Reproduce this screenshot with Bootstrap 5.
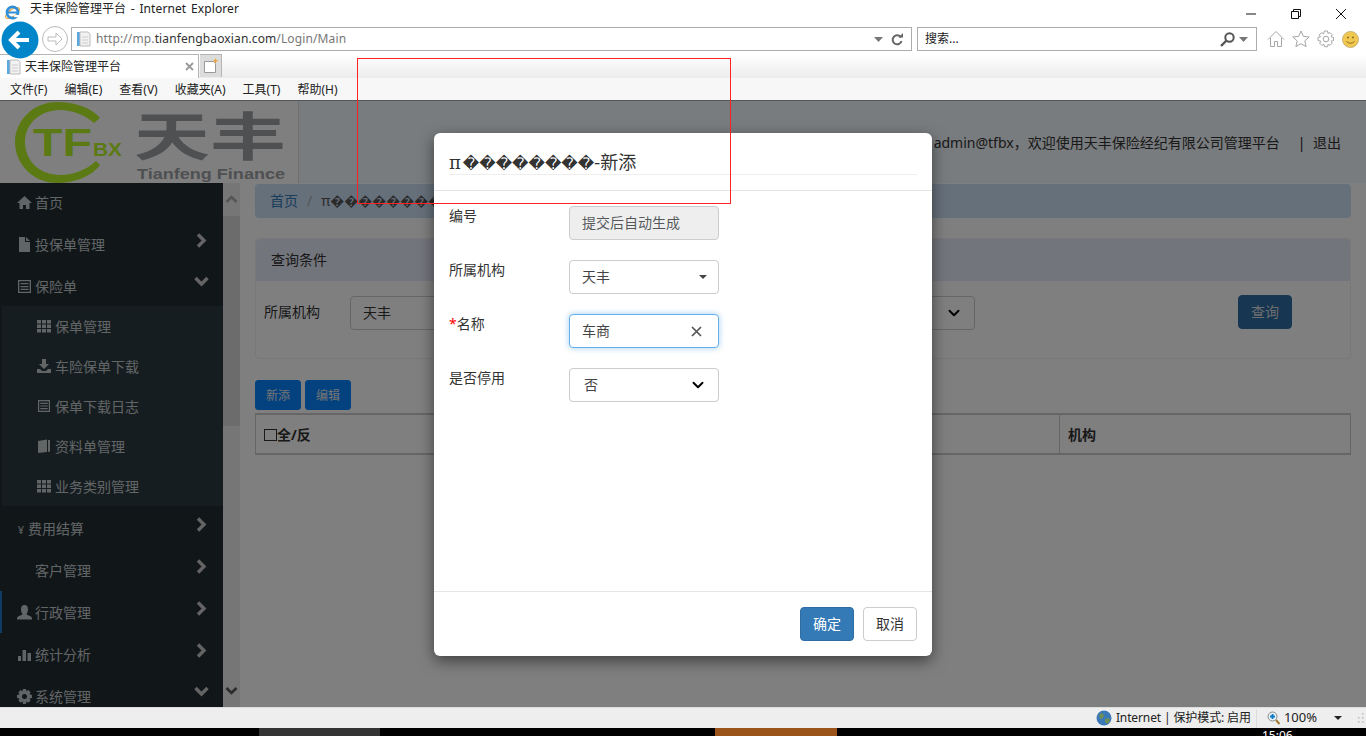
<!DOCTYPE html>
<html lang="zh-CN">
<head>
<meta charset="utf-8">
<title>天丰保险管理平台</title>
<link rel="stylesheet" href="https://cdn.jsdelivr.net/npm/bootstrap@5.3.0/dist/css/bootstrap.min.css">
<style>
html,body{height:100%;overflow:hidden;margin:0}
body{font-family:"Noto Sans","Noto Sans CJK SC",sans-serif;font-size:14px;color:#333;background:#fff}
.shell{height:736px;position:relative;overflow:hidden}
/* browser chrome */
.ie-title{height:26px;padding-left:4px;font-size:12px;color:#222;line-height:18px}
.ie-title-text{margin-left:9px;margin-top:-2px;word-spacing:1.5px;letter-spacing:.1px;padding-top:2px}
.ie-title-cn{letter-spacing:0}
.ie-win{margin-top:9px;padding-right:20px}
.ie-win svg{display:block;margin-left:35px}
.ie-addr{height:28px;padding-left:1px}
.ie-back{margin-top:-5px;flex:none;position:relative;z-index:2}
.ie-fwd{margin-left:2px;margin-top:-1px;flex:none}
.ie-bar{height:24px;border:1px solid #adadad;background:#fff;margin-top:1px;font-size:12px;color:#777;padding:0 4px}
.ie-url{width:841px;margin-left:2px;letter-spacing:.12px}
.ie-url b{font-weight:400;color:#333}
.ie-url-text{margin-left:5px;white-space:nowrap}
.ie-search{width:340px;margin-left:5px;color:#222;padding-left:7px;font-size:12px}
.ie-tools{gap:7px;margin-left:10px;height:24px;margin-top:1px}
.ie-tabs{height:24px;background:linear-gradient(#fff,#ececec)}
.ie-tab{width:199px;height:24px;background:#fff;border:1px solid #b5b5b5;border-width:1px 1px 0 0;font-size:12px;color:#222;padding:0 4px 0 6px}
.ie-tab-text{margin-left:4px}
.ie-new{width:22px;height:23px;margin-left:1px;background:#dcdcdc;border:1px solid #b5b5b5;border-width:1px 1px 0 0}
.ie-menu{height:23px;background:#f7f7f7;font-size:12px;gap:17px;padding:1px 0 0 10px;color:#222;border-bottom:1px solid #555}
/* page */
.pg{height:606px;position:relative;overflow:hidden}
.pg-head{height:82px;background:#f2f8fc}
.logo-box{width:299px;height:82px;background:#fff;border-right:1px solid #ddd;flex:none}
.logo-box svg{display:block}
.logo-ring{fill:#b8f428}
.logo-tf{fill:#b8f428;font-family:"Liberation Sans",sans-serif;font-weight:700}
.logo-cn{fill:#9ea0a4;font-family:"Noto Sans CJK SC",sans-serif;font-weight:700}
.logo-en{fill:#9ea0a4;font-family:"Liberation Sans",sans-serif;font-weight:700}
.head-user{margin-left:auto;color:#333;font-size:14px;padding-right:25px;margin-top:32px;white-space:nowrap;height:20px;line-height:20px}
.head-sep{margin:0 4px 0 18px;color:#222}
.pg-main{height:524px}
.side{width:223px;background:#222d32;flex:none;overflow:hidden;color:#c4cacd}
.side-inner{margin-top:-2px}
.side-item{height:42px;padding:0 16px 0 17px;font-size:14px}
.side-item svg.gi{width:15px;height:15px;fill:#c4cacd;flex:none;margin-right:3px}
.side-item .chev{margin-left:auto;margin-top:-8px;flex:none}
.side-item .chev-d{margin-right:-2px;margin-top:-9px}
.chev{fill:none;stroke:#c8c8c8;stroke-width:3.4}
.side-item.on{box-shadow:inset 2px 0 0 #1e78c8}
.side-yen{width:8px;margin-right:3px;margin-top:5px;text-align:center;font-size:11px}
.side-blank{width:18px}
.side-sub{background:#2c3b41;margin:-1px 0 1px 2px;list-style:none;padding:0}
.side-sub li{height:40px;padding-left:35px;font-size:14px}
.side-sub svg{width:14px;height:14px;fill:#c4cacd;margin-right:4px;flex:none}
.sbar{width:17px;background:#ececec;flex:none;position:relative}
.sbar-btn{height:33px;align-items:center;justify-content:center}
.sbar-thumb{height:210px;background:#d8d8d8}
.sbar-fill{flex:1}
.sbar svg{fill:none;stroke:#555;stroke-width:2.6}
.sbar-up svg{stroke:#aaa}
.cont{flex:1;background:#fff;padding:1px 15px 0;min-width:0}
.crumb{height:34px;background:#cce0f6;border-radius:4px;padding:0 15px 2px;margin:0 0 20px;--bs-breadcrumb-divider-color:#aaa;--bs-breadcrumb-item-padding-x:9px}
.crumb a{color:#337ab7;text-decoration:none}
.crumb .breadcrumb-item.active{color:#555}
.qpanel{height:121px;border:1px solid #f0f0f0;border-radius:4px;--bs-card-border-color:#f0f0f0;margin-bottom:21px}
.qhead{height:42px;background:#e6ebf8;border:0;padding:0 15px 2px;font-size:14px;color:#333;border-radius:4px 4px 0 0!important}
.qbody{padding:15px 8px;align-items:flex-start}
.qlabel{width:86px;flex:none;line-height:32px;color:#333}
.qsel{height:34px;border:1px solid #ccc;border-radius:4px;font-size:14px;color:#333;box-shadow:none;flex:none}
.qsel-a{width:300px;padding:0 12px 2px}
.qsel-b{width:300px;margin-left:25px;--bs-form-select-bg-img:none;background-image:url("data:image/svg+xml,%3csvg xmlns='http://www.w3.org/2000/svg' viewBox='0 0 16 16'%3e%3cpath fill='none' stroke='%23000' stroke-linecap='round' stroke-linejoin='round' stroke-width='2.6' d='m2 5 6 6 6-6'/%3e%3c/svg%3e")}
.qbtn{width:54px;height:34px;margin-left:263px;margin-top:-1px;flex:none;padding:0 0 2px;font-size:14px;background:#2c6ca3;border-color:#2e6da4;color:#ddd;border-radius:4px}
.tools{gap:4px;margin-bottom:3px}
.tbtn{width:46px;height:30px;padding:1px 0 0;font-size:12px;background:#0684fe;border-color:#0684fe;color:#e8e8e8;border-radius:3px}
.grid{width:100%;height:42px;margin:0;border-collapse:collapse;table-layout:fixed;--bs-table-border-color:#ccc}
.grid th{border:1px solid #ccc;border-width:2px 1px;padding:0 8px;vertical-align:middle;font-size:14px;color:#333;font-weight:700}
.grid .c-last{width:291px}
.ckb{display:inline-block;width:13px;height:12px;border:1px solid #333;vertical-align:-1px}
/* overlay */
.dim{position:absolute;inset:0;background:rgba(0,0,0,.5)}
.dlg{position:absolute;left:434px;top:32px;width:498px;height:523px;background:#fff;border-radius:6px;box-shadow:0 5px 15px rgba(0,0,0,.5);display:flex;flex-direction:column;color:#333}
.dlg-head{height:58px;padding:15px 15px 0;border-bottom:1px solid #e5e5e5;flex:none}
.dlg-title{font-size:18px;line-height:27px;height:27px;margin:0;font-weight:400;border-bottom:1px solid #eee;color:#333;white-space:nowrap;font-family:"Noto Sans CJK SC",sans-serif}
.dlg-pi{font-family:"DejaVu Serif",serif;margin-right:2px}
.dlg-bad{font-family:"DejaVu Sans",sans-serif;font-size:16px}
.dlg-body{flex:1;padding:15px 15px 0}
.frow{margin-bottom:20px;height:34px}
.flab{width:120px;flex:none;line-height:20px;color:#333}
.req{color:#f00}
.fctl{width:150px;height:34px;border:1px solid #ccc;border-radius:4px;font-size:14px;color:#444;padding:0 12px 2px;box-shadow:none;background-color:#fff}
.fctl:disabled,.fctl-off{background:#eee;color:#aaa;opacity:1}
.fctl-focus{border-color:#66afe9;box-shadow:0 0 6px rgba(102,175,233,.6)}
.f-sel{padding-left:14px;--bs-form-select-bg-img:none;background-image:url("data:image/svg+xml,%3csvg xmlns='http://www.w3.org/2000/svg' viewBox='0 0 16 16'%3e%3cpath fill='none' stroke='%23000' stroke-linecap='round' stroke-linejoin='round' stroke-width='2.6' d='m2 5 6 6 6-6'/%3e%3c/svg%3e")}
.fctl .caret{width:0;height:0;border:4.5px solid transparent;border-top-color:#444;border-bottom:0;margin-top:2px;margin-right:-1px}
.dlg-x{margin-right:4px;margin-top:2px}
.dlg-foot{height:65px;border-top:1px solid #e5e5e5;padding:15px;gap:9px;flex:none}
.okb,.nob{width:54px;height:34px;padding:0 0 2px;font-size:14px;border-radius:4px}
.okb{background:#337ab7;border-color:#2e6da4}
.nob{background:#fff;border-color:#ccc;color:#333}
.redbox{position:absolute;left:357px;top:58px;width:374px;height:146px;border:1px solid #f22;z-index:5;pointer-events:none}
/* status and taskbar */
.ie-status{height:21px;background:#eee;border-top:1px solid #ddd;font-size:12px;color:#222;white-space:nowrap}
.st-txt{margin-left:4px;margin-right:5px;letter-spacing:-.12px}
.st-sep{height:19px;width:1px;background:#ddd;margin-right:10px}
.st-zoom{margin-left:4px;font-size:13px}
.st-tri{margin-left:17px;margin-right:14px;width:0;height:0;border:4px solid transparent;border-top-color:#222;border-bottom:0}
.st-grip{margin-right:2px}
.task{height:8px;background:#000;position:relative;overflow:hidden}
.task-a{margin-left:259px;width:121px;background:#333}
.task-b{margin-left:335px;width:122px;background:#9a5318}
.task-clock{position:absolute;left:1262px;top:1px;color:#fff;font-size:12px;line-height:14px}
</style>
</head>
<body>
<div class="shell">

<div class="ie-title d-flex">
  <svg class="mt-1" width="17" height="17" viewBox="0 0 17 17"><ellipse cx="8.500" cy="9" rx="8" ry="3.500" transform="rotate(-35 8.500 9)" fill="none" stroke="#e8a33d" stroke-width="1.300"/><circle cx="8.500" cy="8.500" r="5.600" fill="none" stroke="#2f8fd8" stroke-width="2.600"/><path d="M4 8.500h9" stroke="#2f8fd8" stroke-width="2"/><path d="M10 12h5" stroke="#fff" stroke-width="2.200"/></svg>
  <div class="ie-title-text"><span class="ie-title-cn">天丰保险管理平台</span> - Internet Explorer</div>
  <div class="ie-win d-flex ms-auto">
    <svg width="10" height="10" viewBox="0 0 10 10"><path d="M0 5h10" stroke="#111"/></svg>
    <svg width="10" height="10" viewBox="0 0 10 10" fill="none" stroke="#111"><path d="M.5 2.500h7v7h-7z"/><path d="M2.500 2.500v-2h7v7h-2"/></svg>
    <svg width="10" height="10" viewBox="0 0 10 10" stroke="#111"><path d="M0 0l10 10M10 0L0 10"/></svg>
  </div>
</div>

<div class="ie-addr d-flex align-items-start">
  <svg class="ie-back" width="38" height="38" viewBox="0 0 38 38"><circle cx="19" cy="19" r="18.500" fill="#0086c9"/><path d="M28 19H11M18 11l-8 8 8 8" fill="none" stroke="#fff" stroke-width="4"/></svg>
  <svg class="ie-fwd" width="28" height="28" viewBox="0 0 28 28"><circle cx="14" cy="14" r="12.500" fill="#fff" stroke="#bbb"/><path d="M7 12h8V8l6 6-6 6v-4H7z" fill="#fff" stroke="#bbb"/></svg>
  <div class="ie-bar ie-url d-flex align-items-center">
    <svg width="15" height="16" viewBox="0 0 15 16"><rect x="1" y="1" width="5" height="14" fill="#5ba7e0"/><path d="M4 1h8l2 2v12H4z" fill="#f2f2f2" stroke="#bbb"/><path d="M6 6h6M6 9h6M6 12h6" stroke="#ccc"/></svg>
    <span class="ie-url-text">http://mp.<b>tianfengbaoxian.com</b>/Login/Main</span>
    <svg class="ms-auto" width="9" height="5" viewBox="0 0 9 5"><path d="M0 0h9L4.500 5z" fill="#777"/></svg>
    <svg class="ms-2 me-1" width="12" height="13" viewBox="0 0 12 13"><path d="M10 4.500A4.500 4.500 0 1 0 10.500 8" fill="none" stroke="#666" stroke-width="2"/><path d="M7.500 4.500H12V0z" fill="#666"/></svg>
  </div>
  <div class="ie-bar ie-search d-flex align-items-center">
    <span>搜索...</span>
    <svg class="ms-auto" width="15" height="15" viewBox="0 0 15 15" fill="none" stroke="#555"><circle cx="9.500" cy="5.500" r="4.200" stroke-width="2"/><path d="M6.500 8.500L1 14" stroke-width="2.400"/></svg>
    <svg class="ms-1 me-1" width="9" height="5" viewBox="0 0 9 5"><path d="M0 0h9L4.500 5z" fill="#777"/></svg>
  </div>
  <div class="ie-tools d-flex align-items-center">
    <svg width="18" height="18" viewBox="0 0 18 18" fill="none" stroke="#a5a5a5"><path d="M1 9.500L9 1.500l8 8M3.500 8v8.500h4v-5h3v5h4V8"/></svg>
    <svg width="18" height="18" viewBox="0 0 18 18" fill="none" stroke="#a5a5a5"><path d="M9 1l2.400 5.400 5.800.6-4.400 3.900 1.300 5.700L9 13.700l-5.100 2.900 1.300-5.700L.8 7l5.800-.6z"/></svg>
    <svg width="18" height="18" viewBox="0 0 18 18" fill="none" stroke="#a5a5a5"><circle cx="9" cy="9" r="2.800"/><path d="M7.500 1h3l.5 2.500 2-1 2.200 2.200-1.100 2 2.400.8v3l-2.400.7 1.100 2-2.200 2.200-2-1.100-.5 2.400h-3l-.6-2.400-2 1.100-2.200-2.200 1.100-2L1 10.500v-3l2.400-.6-1.100-2 2.200-2.200 2 1.100z"/></svg>
    <svg width="17" height="17" viewBox="0 0 17 17"><circle cx="8.500" cy="8.500" r="8" fill="#f0c850" stroke="#c9b27a"/><circle cx="6" cy="6.500" r="1" fill="#8a6a20"/><circle cx="11" cy="6.500" r="1" fill="#8a6a20"/><path d="M4.500 10.500q4 3.500 8 0" fill="none" stroke="#8a6a20"/></svg>
  </div>
</div>

<div class="ie-tabs d-flex">
  <div class="ie-tab d-flex align-items-center">
    <svg width="15" height="16" viewBox="0 0 15 16"><rect x="1" y="1" width="5" height="14" fill="#5ba7e0"/><path d="M4 1h8l2 2v12H4z" fill="#f2f2f2" stroke="#bbb"/><path d="M6 6h6M6 9h6M6 12h6" stroke="#ccc"/></svg>
    <span class="ie-tab-text">天丰保险管理平台</span>
    <svg class="ms-auto" width="9" height="9" viewBox="0 0 9 9"><path d="M1 1l7 7M8 1L1 8" stroke="#999" stroke-width="1.800"/></svg>
  </div>
  <div class="ie-new d-flex align-items-center justify-content-center">
    <svg width="16" height="16" viewBox="0 0 16 16"><path d="M1.500 3.500h9l2 2v9h-11z" fill="#fff" stroke="#999"/><path d="M12.500 0l.8 2 2 .6-2 .8-.8 2-.7-2-2-.8 2-.6z" fill="#f0a030"/></svg>
  </div>
</div>

<div class="ie-menu d-flex align-items-center">
  <span>文件(F)</span><span>编辑(E)</span><span>查看(V)</span><span>收藏夹(A)</span><span>工具(T)</span><span>帮助(H)</span>
</div>

<div class="pg">
  <div class="pg-head d-flex">
    <div class="logo-box">
      <svg width="298" height="82" viewBox="0 0 298 82">
        <path class="logo-ring" d="M100 17C92 7 75 1 57 1C33 1 15 20 15 41C15 63 33 82 57 82C75 82 92 75 100 64L96 60C85 70 72 74 60 74C40 74 25 60 25 41C25 23 40 9 60 9C72 9 85 14 94 22Z"/>
        <text class="logo-tf" x="33" y="55" font-size="39" textLength="59" lengthAdjust="spacingAndGlyphs">TF</text>
        <text class="logo-tf" x="93" y="55" font-size="18" textLength="29" lengthAdjust="spacingAndGlyphs">BX</text>
        <text class="logo-cn" x="134" y="55" font-size="52" textLength="152" lengthAdjust="spacingAndGlyphs">天丰</text>
        <text class="logo-en" x="137" y="78" font-size="15" textLength="148" lengthAdjust="spacingAndGlyphs">Tianfeng Finance</text>
      </svg>
    </div>
    <div class="head-user">admin@tfbx，欢迎使用天丰保险经纪有限公司管理平台<span class="head-sep">|</span> 退出</div>
  </div>
  <div class="pg-main d-flex">
    <nav class="side">
      <div class="side-inner">
        <div class="side-item d-flex align-items-center"><svg class="gi" viewBox="0 0 15 15"><path d="M7.500 1L0 8h2.500v6H6v-4h3v4h3.500V8H15z"/></svg>首页</div>
        <div class="side-item d-flex align-items-center"><svg class="gi" viewBox="0 0 15 15"><path d="M2 0h6v5h5v10H2zM9 0l4 4H9z"/></svg>投保单管理<svg class="chev" width="11" height="15" viewBox="0 0 11 15"><path d="M2 1.500l6 6-6 6"/></svg></div>
        <div class="side-item d-flex align-items-center"><svg class="gi" viewBox="0 0 15 15"><path fill-rule="evenodd" d="M1 1h13v13H1zm1.300 1.300v10.400h10.400V2.300zM3.500 4h8v1.300h-8zm0 2.900h8v1.300h-8zm0 2.900h8v1.300h-8z"/></svg>保险单<svg class="chev chev-d" width="15" height="11" viewBox="0 0 15 11"><path d="M1.500 2l6 6 6-6"/></svg></div>
        <ul class="side-sub">
          <li class="d-flex align-items-center"><svg viewBox="0 0 14 14"><path d="M0 1h4v3.500H0zm5 0h4v3.500H5zm5 0h4v3.500h-4zM0 5.500h4V9H0zm5 0h4V9H5zm5 0h4V9h-4zM0 10h4v3.500H0zm5 0h4v3.500H5zm5 0h4v3.500h-4z"/></svg>保单管理</li>
          <li class="d-flex align-items-center"><svg viewBox="0 0 14 14"><path d="M5 0h4v5h3L7 10 2 5h3zM0 10h3l2 2h4l2-2h3v4H0z"/></svg>车险保单下载</li>
          <li class="d-flex align-items-center"><svg viewBox="0 0 14 14"><path fill-rule="evenodd" d="M1 1h12v12H1zm1.200 1.200v9.600h9.600V2.200zM3.300 3.700h7.500v1.200H3.300zm0 2.700h7.500v1.200H3.300zm0 2.700h7.500v1.200H3.300z"/></svg>保单下载日志</li>
          <li class="d-flex align-items-center"><svg viewBox="0 0 14 14"><path d="M1 2l9-1.500V13l-9 1zM11 1h2v11.500L11 13z"/></svg>资料单管理</li>
          <li class="d-flex align-items-center"><svg viewBox="0 0 14 14"><path d="M0 1h4v3.500H0zm5 0h4v3.500H5zm5 0h4v3.500h-4zM0 5.500h4V9H0zm5 0h4V9H5zm5 0h4V9h-4zM0 10h4v3.500H0zm5 0h4v3.500H5zm5 0h4v3.500h-4z"/></svg>业务类别管理</li>
        </ul>
        <div class="side-item d-flex align-items-center"><span class="side-yen">¥</span>费用结算<svg class="chev" width="11" height="15" viewBox="0 0 11 15"><path d="M2 1.500l6 6-6 6"/></svg></div>
        <div class="side-item d-flex align-items-center"><span class="side-blank"></span>客户管理<svg class="chev" width="11" height="15" viewBox="0 0 11 15"><path d="M2 1.500l6 6-6 6"/></svg></div>
        <div class="side-item on d-flex align-items-center"><svg class="gi" viewBox="0 0 15 15"><path d="M7.500 0C10 0 11 2 11 4.500 11 7 9.800 8 9.500 9.500c2 1 5 1.500 5.500 3.500v1.500H0V13c.5-2 3.500-2.500 5.500-3.500C5.200 8 4 7 4 4.500 4 2 5 0 7.500 0z"/></svg>行政管理<svg class="chev" width="11" height="15" viewBox="0 0 11 15"><path d="M2 1.500l6 6-6 6"/></svg></div>
        <div class="side-item d-flex align-items-center"><svg class="gi" viewBox="0 0 15 15"><path d="M1 9h3v5H1zm4.500-6h3.500v11H5.500zM10.500 6H14v8h-3.500z"/></svg>统计分析<svg class="chev" width="11" height="15" viewBox="0 0 11 15"><path d="M2 1.500l6 6-6 6"/></svg></div>
        <div class="side-item d-flex align-items-center"><svg class="gi" viewBox="0 0 15 15"><path fill-rule="evenodd" d="M6 0h3l.5 2.200 1.900-1.100 2.200 2.200-1.100 1.900L15 6v3l-2.500.6 1.100 1.900-2.200 2.200-1.900-1.100L9 15H6l-.5-2.400-1.900 1.100-2.200-2.200 1.100-1.900L0 9V6l2.500-.8-1.100-1.900 2.200-2.200 1.900 1.100zM7.500 5a2.500 2.500 0 1 0 0 5 2.500 2.500 0 0 0 0-5z"/></svg>系统管理<svg class="chev chev-d" width="15" height="11" viewBox="0 0 15 11"><path d="M1.500 2l6 6 6-6"/></svg></div>
      </div>
    </nav>
    <div class="sbar d-flex flex-column">
      <div class="sbar-btn sbar-up d-flex"><svg width="13" height="9" viewBox="0 0 13 9"><path d="M1.500 7l5-5 5 5"/></svg></div>
      <div class="sbar-thumb"></div>
      <div class="sbar-fill"></div>
      <div class="sbar-btn d-flex"><svg width="13" height="9" viewBox="0 0 13 9"><path d="M1.500 2l5 5 5-5"/></svg></div>
    </div>
    <main class="cont">
      <ol class="breadcrumb crumb align-items-center">
        <li class="breadcrumb-item"><a href="#">首页</a></li>
        <li class="breadcrumb-item active">π���������</li>
      </ol>
      <div class="card qpanel">
        <div class="card-header qhead d-flex align-items-center">查询条件</div>
        <div class="card-body qbody d-flex">
          <span class="qlabel">所属机构</span>
          <div class="qsel qsel-a d-flex align-items-center">天丰</div>
          <select class="form-select qsel qsel-b"><option></option></select>
          <button class="btn btn-primary qbtn" type="button">查询</button>
        </div>
      </div>
      <div class="tools d-flex">
        <button class="btn btn-primary tbtn" type="button">新添</button>
        <button class="btn btn-primary tbtn" type="button">编辑</button>
      </div>
      <table class="table grid">
        <thead><tr><th><span class="ckb"></span>全/反</th><th class="c-last">机构</th></tr></thead>
      </table>
    </main>
  </div>
  <div class="dim"></div>
  <div class="dlg" role="dialog">
    <div class="dlg-head"><h5 class="dlg-title"><span class="dlg-pi">π</span><span class="dlg-bad">��������</span>-新添</h5></div>
    <div class="dlg-body">
      <div class="frow d-flex"><label class="flab">编号</label><input class="form-control fctl" disabled placeholder="提交后自动生成"></div>
      <div class="frow d-flex"><label class="flab">所属机构</label><div class="fctl d-flex align-items-center justify-content-between"><span>天丰</span><i class="caret"></i></div></div>
      <div class="frow d-flex"><label class="flab"><span class="req">*</span>名称</label><div class="fctl fctl-focus d-flex align-items-center justify-content-between"><span>车商</span><svg class="dlg-x" width="11" height="11" viewBox="0 0 11 11"><path d="M1 1l9 9M10 1l-9 9" stroke="#555" stroke-width="1.700"/></svg></div></div>
      <div class="frow d-flex"><label class="flab">是否停用</label><select class="form-select fctl f-sel"><option>否</option></select></div>
    </div>
    <div class="dlg-foot d-flex justify-content-end">
      <button class="btn btn-primary okb" type="button">确定</button>
      <button class="btn nob" type="button">取消</button>
    </div>
  </div>
</div>

<div class="ie-status d-flex align-items-center justify-content-end">
  <svg width="16" height="16" viewBox="0 0 16 16"><circle cx="8" cy="8" r="7.500" fill="#3a78b8"/><path d="M3 5l3-2 2 2-1 3-3 1zM9 9l4-1 1 3-3 3-2-2z" fill="#6d8f55"/></svg>
  <span class="st-txt">Internet | 保护模式: 启用</span>
  <span class="st-sep"></span>
  <svg width="13" height="14" viewBox="0 0 13 14"><circle cx="5.500" cy="5.500" r="4.500" fill="#e8f2fa" stroke="#888"/><path d="M5.500 3v5M3 5.500h5" stroke="#0a7ac4" stroke-width="1.800"/><path d="M9 9l3.500 4" stroke="#a07a30" stroke-width="2"/></svg>
  <span class="st-zoom">100%</span>
  <span class="st-tri"></span>
  <svg class="st-grip" width="8" height="12" viewBox="0 0 8 12"><path d="M6 1h1.500v1.500H6zM6 5h1.500v1.500H6zM6 9h1.500v1.500H6zM2 5h1.500v1.500H2zM2 9h1.500v1.500H2z" fill="#bbb"/></svg>
</div>
<div class="task d-flex">
  <div class="task-a"></div>
  <div class="task-b"></div>
  <span class="task-clock">15:06</span>
</div>

<div class="redbox"></div>
</div>
<script src="https://cdn.jsdelivr.net/npm/bootstrap@5.3.0/dist/js/bootstrap.bundle.min.js"></script>
</body>
</html>
